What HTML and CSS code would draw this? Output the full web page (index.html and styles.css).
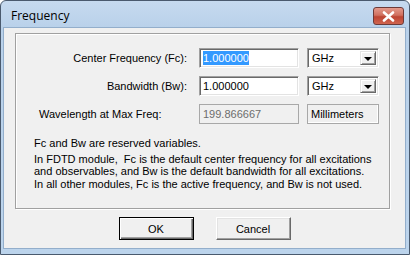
FILE: index.html
```html
<!DOCTYPE html>
<html>
<head>
    <meta charset="utf-8">
    <title>Frequency</title>
    <link rel="stylesheet" href="styles.css">
</head>
<body>
    <div class="window">
        <div class="titlebar">
            <span class="title">Frequency</span>
            <div class="close-btn">
                <svg width="13" height="11" viewBox="0 0 13 11">
                    <path d="M2 1.5 L11 9.5 M11 1.5 L2 9.5" stroke="#ffffff" stroke-width="2.6" stroke-linecap="round"/>
                </svg>
            </div>
        </div>

        <div class="client">
            <div class="group">
                <div class="form">
                    <div class="label">Center Frequency (Fc):</div>
                    <div class="field sunken"><span class="selected">1.000000</span></div>
                    <div class="combo sunken">
                        <span>GHz</span>
                        <div class="drop"><div class="arrow"></div></div>
                    </div>

                    <div class="label">Bandwidth (Bw):</div>
                    <div class="field sunken">1.000000</div>
                    <div class="combo sunken">
                        <span>GHz</span>
                        <div class="drop"><div class="arrow"></div></div>
                    </div>

                    <div class="label left">Wavelength at Max Freq:</div>
                    <div class="field readonly">199.866667</div>
                    <div class="unit">Millimeters</div>
                </div>

                <div class="notes">
                    <p class="note-1">Fc and Bw are reserved variables.</p>
                    <p class="note-2">In FDTD module,&nbsp; Fc is the default center frequency for all excitations<br>and observables, and Bw is the default bandwidth for all excitations.</p>
                    <p class="note-3">In all other modules, Fc is the active frequency, and Bw is not used.</p>
                </div>
            </div>

            <div class="buttons">
                <div class="button default">OK</div>
                <div class="button">Cancel</div>
            </div>
        </div>
    </div>
</body>
</html>
```

FILE: styles.css
```css
body {
    margin: 0;
    background-color: #ffffff;
    font-family: 'Liberation Sans', Arial, sans-serif;
    font-size: 11px;
    color: #000000;
}

.window {
    width: 410px;
    height: 255px;
    box-sizing: border-box;
    border: 1px solid #4a5a6e;
    border-radius: 6px 6px 0 0;
    background: linear-gradient(to bottom, #c6daef 0px, #b9d1ea 26px, #bcd4ec 100%);
    padding: 0 3px 5px 2px;
    display: flex;
    flex-direction: column;
}

.titlebar {
    height: 26px;
    display: flex;
    align-items: flex-start;
    justify-content: space-between;
}

.title {
    font-family: 'Open Sans', 'Noto Sans', sans-serif;
    font-size: 12px;
    margin: 6px 0 0 8px;
}

.close-btn {
    width: 29px;
    height: 16px;
    margin: 6px 2px 0 0;
    border: 1px solid #6d3a38;
    border-radius: 3px;
    background: linear-gradient(to bottom, #e49a8c 0%, #d0705f 45%, #bd4432 55%, #cf6550 100%);
    display: flex;
    align-items: center;
    justify-content: center;
}

.client {
    flex: 1;
    background-color: #f0f0f0;
    border: 1px solid #93aecb;
    display: flex;
    flex-direction: column;
    padding: 5px 15px 0 11px;
}

.group {
    height: 176px;
    box-sizing: border-box;
    border: 1px solid #a0a0a0;
    box-shadow: inset 1px 1px 0 #ffffff, 1px 1px 0 #ffffff;
    padding: 14px 0 0 23px;
}

.form {
    display: grid;
    grid-template-columns: 148px 100px 68px;
    grid-auto-rows: 20px;
    column-gap: 12px;
    row-gap: 8px;
}

.form > :nth-child(3n) {
    margin-left: -4px;
}

.label {
    display: flex;
    align-items: center;
    justify-content: flex-end;
    white-space: nowrap;
}

.label.left {
    justify-content: flex-start;
}

.sunken {
    box-sizing: border-box;
    background-color: #ffffff;
    border-top: 1px solid #a0a0a0;
    border-left: 1px solid #a0a0a0;
    border-right: 1px solid #ffffff;
    border-bottom: 1px solid #ffffff;
    box-shadow: inset 1px 1px 0 #696969, inset -1px -1px 0 #e3e3e3;
}

.field {
    display: flex;
    align-items: center;
    padding-left: 3px;
}

.selected {
    background-color: #3399ff;
    color: #ffffff;
    padding: 1px 0;
}

.field.readonly {
    box-sizing: border-box;
    border: 1px solid #a8a8a8;
    background-color: #f0f0f0;
    color: #6d6d6d;
}

.combo {
    display: flex;
    align-items: center;
    justify-content: space-between;
    padding: 2px 2px 2px 4px;
}

.drop {
    width: 16px;
    height: 14px;
    box-sizing: border-box;
    background-color: #f0f0f0;
    border-top: 1px solid #e3e3e3;
    border-left: 1px solid #e3e3e3;
    border-right: 1px solid #696969;
    border-bottom: 1px solid #696969;
    box-shadow: inset 1px 1px 0 #ffffff, inset -1px -1px 0 #a0a0a0;
    display: flex;
    align-items: center;
    justify-content: center;
}

.arrow {
    width: 0;
    height: 0;
    border-left: 4px solid transparent;
    border-right: 4px solid transparent;
    border-top: 4px solid #000000;
    margin-top: 1px;
}

.unit {
    box-sizing: border-box;
    border: 1px solid #a8a8a8;
    box-shadow: inset -1px -1px 0 #ffffff;
    display: flex;
    align-items: center;
    padding-left: 3px;
}

.notes {
    margin: 13px 0 0 -5px;
}

.notes p {
    margin: 0;
    line-height: 12px;
}

.note-2 {
    margin-top: 4px !important;
}

.note-3 {
    margin-top: 1px !important;
}

.buttons {
    display: flex;
    justify-content: center;
    gap: 22px;
    margin-top: 8px;
    margin-left: 4px;
}

.button {
    width: 75px;
    height: 23px;
    box-sizing: border-box;
    background-color: #f0f0f0;
    border-top: 1px solid #ffffff;
    border-left: 1px solid #ffffff;
    border-right: 1px solid #696969;
    border-bottom: 1px solid #696969;
    box-shadow: inset -1px -1px 0 #a0a0a0, inset 1px 1px 0 #e3e3e3;
    display: flex;
    align-items: center;
    justify-content: center;
}

.button.default {
    border: 1px solid #000000;
    box-shadow: inset 1px 1px 0 #ffffff, inset -1px -1px 0 #696969, inset -2px -2px 0 #a0a0a0;
}
```
